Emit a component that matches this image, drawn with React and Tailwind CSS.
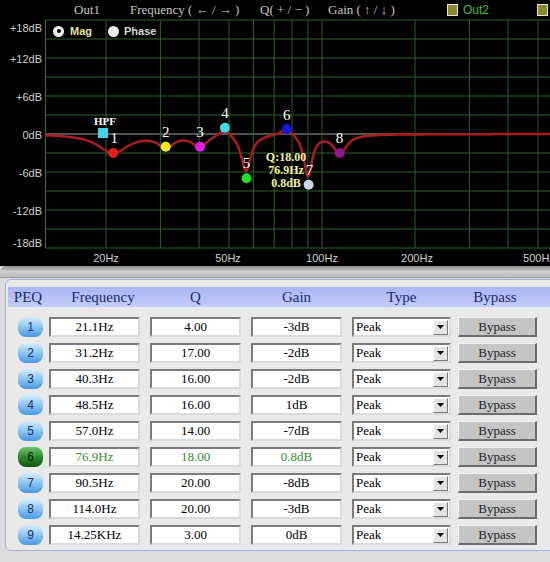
import React from 'react';

// EQ bands shown on the graph: freq, gain, colour of the handle, label offset
const BANDS = [
  { n: 1, f: 21.1, g: -3, color: '#e21d1d', lx: 1, ly: -15 },
  { n: 2, f: 31.2, g: -2, color: '#f2ee1e', lx: 0, ly: -15 },
  { n: 3, f: 40.3, g: -2, color: '#e21ee2', lx: 0, ly: -15 },
  { n: 4, f: 48.5, g: 1, color: '#3fdde8', lx: 0, ly: -15 },
  { n: 5, f: 57.0, g: -7, color: '#22dd22', lx: 0, ly: -15 },
  { n: 6, f: 76.9, g: 0.8, color: '#1414dc', lx: 0, ly: -14 },
  { n: 7, f: 90.5, g: -8, color: '#c9d6ee', lx: 1, ly: -15 },
  { n: 8, f: 114.0, g: -3, color: '#8c168c', lx: 0, ly: -15 },
];

// shape of the drawn response (centre px, depth px, half width px)
const SHAPE = [
  [113, 19, 18],
  [166, 12, 9],
  [200, 12, 9],
  [225, -8, 8],
  [246, 37, 6],
  [287, -8, 8],
  [308, 42, 5],
  [340, 19, 8],
];

const ROWS = [
  ['21.1Hz', '4.00', '-3dB'],
  ['31.2Hz', '17.00', '-2dB'],
  ['40.3Hz', '16.00', '-2dB'],
  ['48.5Hz', '16.00', '1dB'],
  ['57.0Hz', '14.00', '-7dB'],
  ['76.9Hz', '18.00', '0.8dB'],
  ['90.5Hz', '20.00', '-8dB'],
  ['114.0Hz', '20.00', '-3dB'],
  ['14.25KHz', '3.00', '0dB'],
];

const ZERO = 134;
const freqX = (f) => 322 + 309 * Math.log10(f / 100);
const gainY = (g) => ZERO - g * (19 / 3);

const curveY = (x) => SHAPE.reduce((y, [c, d, w]) => y + d / (1 + ((x - c) / w) ** 2), ZERO);
const curvePath = Array.from({ length: 506 }, (_, i) => {
  const x = 45 + i;
  return `${i ? 'L' : 'M'}${x},${curveY(x).toFixed(1)}`;
}).join('');

const GRID_F = [20, 30, 40, 50, 60, 70, 80, 90, 100, 200, 300, 400, 500];
const DB_LABELS = [
  ['+18dB', 28],
  ['+12dB', 58.5],
  ['+6dB', 97],
  ['0dB', 134.5],
  ['-6dB', 172.5],
  ['-12dB', 210.5],
  ['-18dB', 243],
];
const F_LABELS = [
  ['20Hz', 106],
  ['50Hz', 228],
  ['100Hz', 322],
  ['200Hz', 417],
  ['500Hz', 539],
];

const SANS = 'Liberation Sans, Arial, sans-serif';
const SERIF = 'Liberation Serif, Times New Roman, serif';

const Graph = () => (
  <svg width="550" height="247" viewBox="0 19 550 247" className="block">
    {Array.from({ length: 13 }, (_, i) => (
      <line
        key={i}
        x1="45"
        x2="550"
        y1={20 + i * 19}
        y2={20 + i * 19}
        stroke={i === 6 ? '#a3a3a3' : '#2e5c2e'}
        strokeWidth="1"
      />
    ))}
    <line x1="45.5" x2="45.5" y1="20" y2="248" stroke="#3b6e3b" />
    {GRID_F.map((f) => (
      <line key={f} x1={freqX(f)} x2={freqX(f)} y1="20" y2="248" stroke="#2e5c2e" />
    ))}

    {DB_LABELS.map(([t, y]) => (
      <text key={t} x="42" y={y} textAnchor="end" dominantBaseline="central" fontSize="11" fontFamily={SANS} fill="#cfcfcf">
        {t}
      </text>
    ))}
    {F_LABELS.map(([t, x]) => (
      <text key={t} x={x} y="257.5" textAnchor="middle" dominantBaseline="central" fontSize="11" fontFamily={SANS} fill="#cfcfcf">
        {t}
      </text>
    ))}

    <path d={curvePath} fill="none" stroke="#a81d1d" strokeWidth="2.5" strokeLinejoin="round" />

    {/* HPF handle */}
    <rect x="98" y="128" width="10" height="10" fill="#41d6e6" />
    <text x="105" y="121" textAnchor="middle" dominantBaseline="central" fontSize="11" fontWeight="bold" fontFamily={SERIF} fill="#ffffff">
      HPF
    </text>

    {BANDS.map((b) => {
      const x = freqX(b.f);
      const y = gainY(b.g);
      return (
        <g key={b.n}>
          <circle cx={x} cy={y} r="5" fill={b.color} />
          <text
            x={x + b.lx}
            y={y + b.ly}
            textAnchor="middle"
            dominantBaseline="central"
            fontSize="15"
            fontFamily={SERIF}
            fill="#ffffff"
          >
            {b.n}
          </text>
        </g>
      );
    })}

    {/* info for the selected band */}
    {['Q:18.00', '76.9Hz', '0.8dB'].map((t, i) => (
      <text
        key={t}
        x="286"
        y={156.5 + i * 13}
        textAnchor="middle"
        dominantBaseline="central"
        fontSize="12"
        fontWeight="bold"
        fontFamily={SERIF}
        fill="#eeeea0"
      >
        {t}
      </text>
    ))}
  </svg>
);

const Sunken = 'border-2 border-t-[#7b7b7b] border-l-[#7b7b7b] border-r-[#dadada] border-b-[#dadada] bg-white';

const Field = ({ children, green }) => (
  <div
    className={`ml-[10px] flex h-[20px] w-[91px] shrink-0 items-center justify-center ${Sunken} text-[13px] ${
      green ? 'text-[#2f8f2f]' : 'text-black'
    }`}
  >
    {children}
  </div>
);

const Row = ({ n, freq, q, gain }) => {
  const active = n === 6;
  return (
    <div className="flex h-[20px] items-center font-['Liberation_Serif',serif]">
      <div
        className={`ml-[12px] flex h-[20px] w-[25px] shrink-0 items-center justify-center rounded-[8px] font-['Liberation_Sans',sans-serif] text-[12px] ${
          active
            ? 'bg-linear-to-b from-[#6fc86f] via-[#2e8a2e] to-[#0b560b] text-[#0d240d]'
            : 'bg-linear-to-b from-[#d6eefd] via-[#8cc6f2] to-[#4598e2] text-[#1b2e6c]'
        }`}
      >
        {n}
      </div>
      <div
        className={`ml-[6px] flex h-[20px] w-[91px] shrink-0 items-center justify-center ${Sunken} text-[13px] ${
          active ? 'text-[#2f8f2f]' : 'text-black'
        }`}
      >
        {freq}
      </div>
      <Field green={active}>{q}</Field>
      <Field green={active}>{gain}</Field>
      <div className={`ml-[10px] flex h-[20px] w-[99px] shrink-0 items-center ${Sunken} pl-[2px] text-[13px] text-black`}>
        <span className="flex-1">Peak</span>
        <div className="mr-[1px] flex h-[15px] w-[15px] items-center justify-center border border-t-white border-l-white border-r-[#7a7a7a] border-b-[#7a7a7a] bg-[#e4e4e4]">
          <svg width="7" height="4" viewBox="0 0 7 4">
            <path d="M0 0h7L3.5 4z" fill="#000" />
          </svg>
        </div>
      </div>
      <div className="ml-[7px] flex h-[20px] w-[79px] shrink-0 items-center justify-center border-t border-l border-r-2 border-b-2 border-t-[#f2f2f2] border-l-[#f2f2f2] border-r-[#6c6c6c] border-b-[#6c6c6c] bg-[#c5c5c5] text-[13px] text-[#1e1e1e]">
        Bypass
      </div>
    </div>
  );
};

export default function App() {
  return (
    <div className="h-[562px] w-[550px] overflow-hidden bg-[#dcdcdc]">
      {/* graph */}
      <div className="relative h-[266px] bg-black">
        <div className="flex h-[19px] items-center whitespace-nowrap font-['Liberation_Serif',serif] text-[13px] text-[#c6c6c6]">
          <span className="ml-[74px] w-[56px] shrink-0">Out1</span>
          <span className="w-[130px] shrink-0">Frequency ( ← / → )</span>
          <span className="w-[68px] shrink-0">Q( + / − )</span>
          <span className="w-[119px] shrink-0">Gain ( ↑ / ↓ )</span>
          <span className="h-[12px] w-[11px] shrink-0 border border-[#e6e6e6] bg-[#8b8b26]" />
          <span className="ml-[5px] w-[74px] shrink-0 font-['Liberation_Sans',sans-serif] text-[12px] text-[#3dc23d]">Out2</span>
          <span className="h-[12px] w-[11px] shrink-0 border border-[#e6e6e6] bg-[#8b8b26]" />
        </div>
        <Graph />

        <div className="absolute left-[53px] top-[23px] flex items-center font-['Liberation_Sans',sans-serif] text-[11px] font-bold">
          <span className="flex h-[11px] w-[11px] items-center justify-center rounded-full bg-[#f2f2f2]">
            <span className="h-[4px] w-[4px] rounded-full bg-black" />
          </span>
          <span className="ml-[6px] text-[#e6e69c]">Mag</span>
          <span className="ml-[16px] h-[11px] w-[11px] rounded-full bg-[#ececec]" />
          <span className="ml-[5px] text-[#d6d6d6]">Phase</span>
        </div>
      </div>

      {/* scroll strip */}
      <div className="h-[12px] rounded-tl-[6px] border-b border-[#9c9c9c] bg-linear-to-b from-[#8a8a8a] via-[#cdcdcd] to-[#bdbdbd]" />

      {/* PEQ table */}
      <div className="pl-[5px] pt-[1px]">
        <div className="w-[560px] rounded-[6px] border border-[#a8b0e2] bg-[#e9e9e9] pb-[5px] pt-[7px]">
          <div className="ml-[2px] flex h-[20px] items-center bg-linear-to-b from-[#aab6f4] to-[#c3cbf8] font-['Liberation_Serif',serif] text-[15px] text-[#1b2a6b]">
            <span className="w-[40px] shrink-0 text-center">PEQ</span>
            <span className="w-[110px] shrink-0 text-center">Frequency</span>
            <span className="w-[75px] shrink-0 text-center">Q</span>
            <span className="w-[127px] shrink-0 text-center">Gain</span>
            <span className="w-[83px] shrink-0 text-center">Type</span>
            <span className="w-[104px] shrink-0 text-center">Bypass</span>
          </div>
          <div className="mt-[10px] flex flex-col gap-[6px]">
            {ROWS.map(([freq, q, gain], i) => (
              <Row key={i} n={i + 1} freq={freq} q={q} gain={gain} />
            ))}
          </div>
        </div>
      </div>
    </div>
  );
}
